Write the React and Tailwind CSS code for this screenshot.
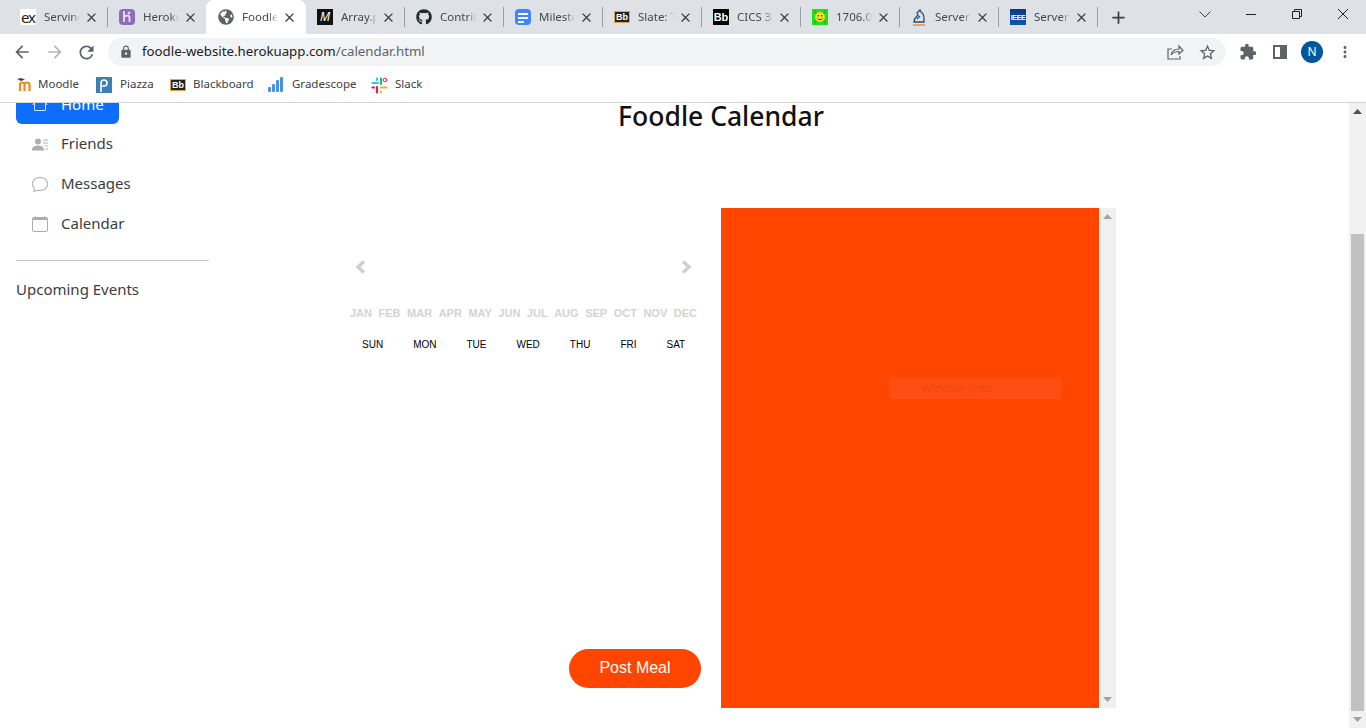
import React from 'react';
import { MdArrowBack, MdArrowForward, MdRefresh, MdLock, MdStarBorder, MdExtension, MdMoreVert, MdClose, MdAdd } from 'react-icons/md';
import { FaGithub, FaGlobeAmericas } from 'react-icons/fa';
import { BsPersonLinesFill, BsChat, BsCalendar, BsHouse } from 'react-icons/bs';

const uiFont = { fontFamily: '"Noto Sans", sans-serif' };
const arial = { fontFamily: '"Liberation Sans", sans-serif' };

const ExIcon = () => (
  <div className="w-4 h-4 bg-white flex items-center justify-center text-[15px] leading-none text-[#222] tracking-[-1px]">ex</div>
);
const HerokuIcon = () => (
  <div className="w-4 h-4 rounded-sm bg-[#8f6bb8] flex items-center justify-center">
    <svg width="10" height="12" viewBox="0 0 10 12" fill="none" stroke="#e9e0f2" strokeWidth="1.8">
      <path d="M2 0v11M2 6c2-1.6 5.5-2 5.5 .5V11M8 1 6 3" />
    </svg>
  </div>
);
const MIcon = () => (
  <div className="w-4 h-4 bg-[#111] flex items-center justify-center text-white text-[12px] italic leading-none">M</div>
);
const DocsIcon = () => (
  <div className="w-4 h-4 rounded-sm bg-[#4285f4] flex flex-col gap-[2px] pl-[3px] pt-1">
    <div className="w-[10px] h-[2px] bg-white" />
    <div className="w-[10px] h-[2px] bg-white" />
    <div className="w-[6px] h-[2px] bg-white" />
  </div>
);
const SlateIcon = () => (
  <div className="w-4 h-[12px] border border-[#e8a73a] bg-[#222] flex items-center justify-center text-white text-[9px] font-bold leading-none" style={arial}>Bb</div>
);
const BbIcon = () => (
  <div className="w-4 h-4 bg-black flex items-center justify-center text-white text-[11px] font-bold leading-none" style={arial}>Bb</div>
);
const SmileyIcon = () => (
  <svg width="16" height="16" viewBox="0 0 16 16">
    <rect width="16" height="16" fill="#19e619" />
    <path d="M2 2l3 3M14 2l-3 3M2 14l3-3M14 14l-3-3" stroke="#7a7a50" strokeWidth="1.5" />
    <circle cx="8" cy="8" r="5" fill="#f0e020" />
    <circle cx="6.3" cy="6.8" r=".8" fill="#333" />
    <circle cx="9.7" cy="6.8" r=".8" fill="#333" />
    <path d="M5.5 9.5c1 1.5 4 1.5 5 0" stroke="#333" fill="none" />
  </svg>
);
const KnightIcon = () => (
  <svg width="16" height="17" viewBox="0 0 16 17" fill="none" stroke="#1f4d7a" strokeWidth="1.3">
    <path d="M3 13c0-4 2-5 4-7L6 4l3-3 1 2c2 1 3 4 3 7v3z" />
    <path d="M6 10l3-3" />
    <path d="M2 16h12" stroke="#f08a1d" strokeWidth="1.4" />
  </svg>
);
const IeeeIcon = () => (
  <div className="w-4 h-4 bg-gradient-to-b from-[#0b3b83] to-[#0a58a8] flex items-center justify-center text-white text-[7px] font-bold leading-none tracking-tighter" style={arial}>IEEE</div>
);

const tabs = [
  { title: 'Serving Web Content', icon: <ExIcon /> },
  { title: 'Heroku', icon: <HerokuIcon /> },
  { title: 'Foodle', icon: <FaGlobeAmericas size={16} className="text-[#5f6368]" />, active: true },
  { title: 'Array.prototype', icon: <MIcon /> },
  { title: 'Contributors', icon: <FaGithub size={16} className="text-[#24292f]" /> },
  { title: 'Milestone', icon: <DocsIcon /> },
  { title: 'Slate: Tasks', icon: <SlateIcon /> },
  { title: 'CICS 326', icon: <BbIcon /> },
  { title: '1706.03762', icon: <SmileyIcon /> },
  { title: 'Serverless', icon: <KnightIcon /> },
  { title: 'Serverless', icon: <IeeeIcon /> },
];

const Tab = ({ tab, index }) => {
  // no divider next to the active tab
  const hideSep = tab.active || index === 1;
  return (
    <div className="w-[99px] h-[34px] flex items-center shrink-0">
      <div className={`flex-1 h-full flex items-center pl-3 ${tab.active ? 'bg-white rounded-t-lg -mr-px' : ''}`}>
        <div className="w-4 flex justify-center shrink-0">{tab.icon}</div>
        <div className="ml-2 w-[36px] overflow-hidden whitespace-nowrap text-[11.5px] text-[#45494f] [mask-image:linear-gradient(to_right,black_75%,transparent)]">
          {tab.title}
        </div>
        <MdClose size={15} className="ml-[4px] text-[#3c4043] shrink-0" />
      </div>
      {!hideSep && <div className="w-px h-5 bg-[#9aa0a6] translate-x-px" />}
    </div>
  );
};

const ShareIcon = () => (
  <svg width="18" height="18" viewBox="0 0 18 18" fill="none" stroke="#5f6368" strokeWidth="1.2">
    <path d="M6 6H2v10h12v-3" />
    <path d="M5 12c1-4 4-6 8-6V3l4 4.5L13 11V8.5c-3 0-6 1-8 3.5z" />
  </svg>
);

const Triangle = ({ up, color }) => (
  <svg width="9" height="5" viewBox="0 0 9 5" fill={color}>
    <path d={up ? 'M4.5 0 9 5H0z' : 'M0 0h9L4.5 5z'} />
  </svg>
);

const MoodleIcon = () => (
  <svg width="16" height="14" viewBox="0 0 16 14">
    <path d="M1 1l4-1 4 1.5-4 1.5z" fill="#444" />
    <path d="M1 13V6.5C1 5 2 4.5 3.2 4.5S5.5 5 5.5 6.5V13M5.5 13V6.5c0-1.5 1-2 2.5-2s2.5.5 2.5 2V13" fill="none" stroke="#f28a1e" strokeWidth="2.2" transform="translate(3 0)" />
  </svg>
);
const PiazzaIcon = () => (
  <div className="w-4 h-4 bg-[#3d7fb5] flex items-center justify-center">
    <svg width="10" height="14" viewBox="0 0 10 14" fill="none" stroke="#fff" strokeWidth="1.6">
      <path d="M2 14V5a3 3 0 1 1 3 3H3" />
    </svg>
  </div>
);
const GradescopeIcon = () => (
  <svg width="16" height="16" viewBox="0 0 16 16" fill="#4a90e2">
    <rect x="0" y="10" width="3" height="5" rx="1" />
    <rect x="4" y="7" width="3" height="8" rx="1" />
    <rect x="8" y="3" width="3" height="12" rx="1" />
    <rect x="12" y="0" width="3" height="15" rx="1" />
  </svg>
);
const SlackIcon = () => (
  <svg width="17" height="17" viewBox="0 0 17 17" fill="none" strokeWidth="2.2" strokeLinecap="round">
    <path d="M1.5 6h5.5" stroke="#36c5f0" />
    <path d="M6 1.5v1.5" stroke="#36c5f0" />
    <path d="M6 10v5.5" stroke="#e01e5a" />
    <path d="M1.5 10.5h1.5" stroke="#e01e5a" />
    <path d="M10 1.5V7" stroke="#2eb67d" />
    <path d="M10 10.5h5.5" stroke="#ecb22e" />
    <path d="M10 15v-.5" stroke="#ecb22e" />
    <circle cx="14" cy="3" r="1.8" stroke="#e01e5a" strokeWidth="1" />
  </svg>
);

const bookmarks = [
  { label: 'Moodle', icon: <MoodleIcon />, w: 'w-[80px]', gap: 'w-[22px]' },
  { label: 'Piazza', icon: <PiazzaIcon />, w: 'w-[74px]', gap: 'w-[24px]' },
  { label: 'Blackboard', icon: <SlateIcon />, w: 'w-[98px]', gap: 'w-[23px]' },
  { label: 'Gradescope', icon: <GradescopeIcon />, w: 'w-[103px]', gap: 'w-[24px]' },
  { label: 'Slack', icon: <SlackIcon />, w: 'w-[80px]', gap: 'w-[24px]' },
];

const months = ['JAN', 'FEB', 'MAR', 'APR', 'MAY', 'JUN', 'JUL', 'AUG', 'SEP', 'OCT', 'NOV', 'DEC'];
const days = ['SUN', 'MON', 'TUE', 'WED', 'THU', 'FRI', 'SAT'];

const navItems = [
  { label: 'Friends', icon: <BsPersonLinesFill size={17} /> },
  { label: 'Messages', icon: <BsChat size={16} /> },
  { label: 'Calendar', icon: <BsCalendar size={16} /> },
];

export default function App() {
  return (
    <div className="w-[1366px] h-[728px] overflow-hidden flex flex-col bg-white" style={uiFont}>
      {/* Tab strip */}
      <div className="h-[34px] bg-[#dee1e6] flex items-center pl-2 shrink-0">
        {tabs.map((tab, i) => <Tab key={i} tab={tab} index={i} />)}
        <MdAdd size={21} className="ml-[11px] text-[#3c4043]" />
        <div className="ml-auto flex items-center h-full pb-[6px]">
          <svg width="12" height="7" viewBox="0 0 12 7" fill="none" stroke="#3c4043" className="mr-[35px]"><path d="M.5.5 6 6l5.5-5.5" /></svg>
          <svg width="10" height="1" viewBox="0 0 10 1" className="mr-[36px]"><path d="M0 .5h10" stroke="#222" /></svg>
          <svg width="10" height="10" viewBox="0 0 10 10" fill="none" stroke="#222" className="mr-[36px]"><path d="M.5 2.5h7v7h-7zM2.5 2.5v-2h7v7h-2" /></svg>
          <svg width="10" height="10" viewBox="0 0 10 10" stroke="#222" className="mr-[18px]"><path d="M0 0l10 10M10 0 0 10" /></svg>
        </div>
      </div>

      {/* Toolbar */}
      <div className="h-[34px] flex items-center shrink-0 pt-[2px]">
        <MdArrowBack size={20} className="ml-[12px] text-[#5f6368]" />
        <MdArrowForward size={20} className="ml-[13px] text-[#b4b7ba]" />
        <MdRefresh size={21} className="ml-[11px] text-[#5f6368]" />
        <div className="ml-[11px] w-[1118px] h-[28px] rounded-full bg-[#f1f3f4] flex items-center">
          <MdLock size={14} className="ml-[11px] text-[#5f6368]" />
          <span className="ml-[9px] text-[13.25px] text-[#202124]">foodle-website.herokuapp.com<span className="text-[#5f6368]">/calendar.html</span></span>
          <div className="ml-auto mr-[9px] flex items-center gap-[14px]">
            <ShareIcon />
            <MdStarBorder size={19} className="text-[#5f6368]" />
          </div>
        </div>
        <MdExtension size={18} className="ml-[13px] text-[#5f6368]" />
        <div className="ml-[16px] w-[14px] h-[14px] border-2 border-[#5f6368] flex justify-end">
          <div className="w-[5px] h-full bg-[#5f6368]" />
        </div>
        <div className="ml-[14px] w-[22px] h-[22px] rounded-full bg-[#01579b] flex items-center justify-center text-white text-[12px]">N</div>
        <MdMoreVert size={18} className="ml-[13px] text-[#5f6368]" />
      </div>

      {/* Bookmarks bar */}
      <div className="h-[34px] pl-4 flex items-center border-b border-[#d5d5d5] shrink-0 text-[11.5px] text-[#3c4043] box-content">
        {bookmarks.map(b => (
          <div key={b.label} className={`flex items-center shrink-0 ${b.w}`}>
            <div className={`${b.gap} shrink-0`}>{b.icon}</div>
            <span className="pb-[2px]">{b.label}</span>
          </div>
        ))}
      </div>

      {/* Page */}
      <div className="flex-1 flex min-h-0">
        <div className="flex-1 flex min-w-0 overflow-hidden">
          {/* Sidebar, scrolled up a bit */}
          <div className="w-[225px] shrink-0 pl-4 pr-4 -mt-[19px] text-[15px] text-[#3a3d40]">
            <div className="w-[103px] h-[40px] rounded-md bg-[#0d6efd] text-white flex items-center pl-4">
              <BsHouse size={16} className="mr-[13px] opacity-80" />
              <span>Home</span>
            </div>
            {navItems.map(item => (
              <div key={item.label} className="h-[40px] flex items-center pl-4">
                <div className="w-4 mr-[13px] text-[#adadad] flex justify-center">{item.icon}</div>
                <span className="pb-[2px]">{item.label}</span>
              </div>
            ))}
            <div className="mt-4 w-[193px] h-px bg-[#c8c8c8]" />
            <div className="mt-[17px]">Upcoming Events</div>
          </div>

          {/* Main */}
          <div className="w-[992px] shrink-0 flex flex-col">
            <h1 className="h-[105px] leading-[26px] text-center text-[26.5px] font-medium text-[#111]">Foodle Calendar</h1>
            <div className="flex pl-[116px] gap-5 h-[500px]">
              <div className="w-[360px] flex flex-col" style={arial}>
                <div className="mt-[52px] flex justify-between pl-[14px] pr-[9px]">
                  <svg width="11" height="14" viewBox="0 0 11 14" fill="none" stroke="#cfcfcf" strokeWidth="3.5"><path d="M9 1.5 3 7l6 5.5" /></svg>
                  <svg width="11" height="14" viewBox="0 0 11 14" fill="none" stroke="#cfcfcf" strokeWidth="3.5"><path d="M2 1.5 8 7l-6 5.5" /></svg>
                </div>
                <div className="mt-[32px] pl-[9px] pr-[4px] flex justify-between text-[11px] leading-[14px] font-bold text-[#d3d3d3]">
                  {months.map(m => <span key={m}>{m}</span>)}
                </div>
                <div className="mt-[19px] pl-[21px] flex gap-[30px] text-[10px] leading-[12px] text-black">
                  {days.map(d => <span key={d}>{d}</span>)}
                </div>
                <button className="mt-auto mb-5 ml-auto w-[132px] h-[39px] pb-[2px] rounded-full bg-[#ff4500] text-white text-[16px]">Post Meal</button>
              </div>

              {/* Embedded frame */}
              <div className="w-[395px] h-full flex relative">
                <div className="flex-1 bg-[#ff4500]" />
                <div className="w-[17px] bg-[#f0f0f0] flex flex-col items-center justify-between py-[6px]">
                  <Triangle up color="#a3a3a3" />
                  <Triangle color="#a3a3a3" />
                </div>
                {/* snipping tool ghost */}
                <div className="absolute left-[168px] top-[169px] w-[173px] h-[22px] bg-[#ff4e13] flex items-center pl-[32px] text-[11.5px] text-[#ee4810]">Window Snip</div>
              </div>
            </div>
          </div>
        </div>

        {/* Page scrollbar */}
        <div className="w-[17px] shrink-0 bg-[#f1f1f1] flex flex-col items-center">
          <div className="h-[17px] flex items-center justify-center"><Triangle up color="#505050" /></div>
          <div className="mt-[114px] w-[13px] h-[477px] bg-[#c1c1c1]" />
          <div className="h-[17px] flex items-center justify-center"><Triangle color="#a3a3a3" /></div>
        </div>
      </div>
    </div>
  );
}
